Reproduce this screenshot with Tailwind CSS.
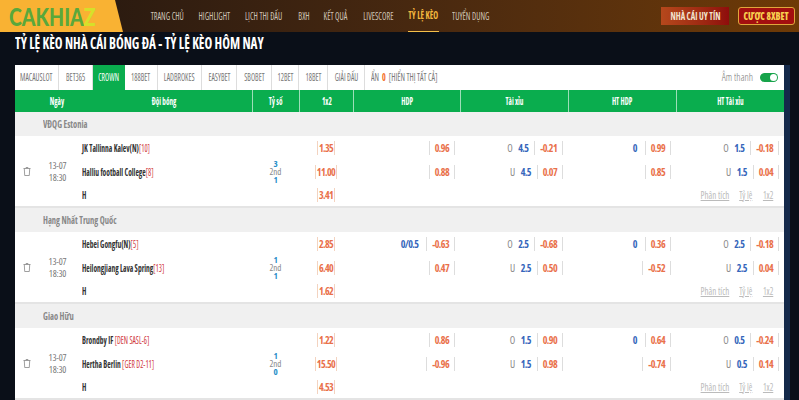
<!DOCTYPE html>
<html lang="vi">
<head>
    <meta charset="UTF-8">
    <title>Tỷ lệ kèo</title>
    <script src="https://cdn.jsdelivr.net/npm/@tailwindcss/browser@4"></script>
</head>
<body class="h-[400px] w-[799px] overflow-hidden bg-[#0a0f18] font-['Open_Sans',sans-serif] [font-stretch:75%]">
    <header class="flex h-8 items-center bg-gradient-to-r from-[#22160f] to-[#6e3a06]">
        <div class="flex h-8 w-[123px] items-center bg-[#f9b233] pl-[9px] font-['Lato',sans-serif] text-[25px] font-black leading-none text-[#5aa83b] [clip-path:polygon(0_0,115px_0,123px_100%,0_100%)]"><span class="origin-left scale-x-[.78] whitespace-nowrap">CAKHIA<span class="text-[#d6e02a]">Z</span></span></div>
        <nav class="ml-[27px] flex h-8 gap-[13px] text-[10px] font-medium text-[#cfc4b6]">
            <a class="flex w-[35px] items-center justify-center"><span class="shrink-0 scale-x-[.82] whitespace-nowrap">TRANG CHỦ</span></a>
            <a class="flex w-[33px] items-center justify-center"><span class="shrink-0 scale-x-[.82] whitespace-nowrap">HIGHLIGHT</span></a>
            <a class="flex w-[40px] items-center justify-center"><span class="shrink-0 scale-x-[.82] whitespace-nowrap">LỊCH THI ĐẤU</span></a>
            <a class="flex w-[13px] items-center justify-center"><span class="shrink-0 scale-x-[.82] whitespace-nowrap">BXH</span></a>
            <a class="flex w-[26px] items-center justify-center"><span class="shrink-0 scale-x-[.82] whitespace-nowrap">KẾT QUẢ</span></a>
            <a class="flex w-[33px] items-center justify-center"><span class="shrink-0 scale-x-[.82] whitespace-nowrap">LIVESCORE</span></a>
            <a class="flex w-[31px] items-center justify-center border-b border-[#f5c04a] font-bold text-[#f5b93f]"><span class="shrink-0 scale-x-[.82] whitespace-nowrap">TỶ LỆ KÈO</span></a>
            <a class="flex w-[38px] items-center justify-center"><span class="shrink-0 scale-x-[.82] whitespace-nowrap">TUYỂN DỤNG</span></a>
        </nav>
        <a class="ml-auto flex h-[18px] w-[68px] items-center justify-center bg-gradient-to-r from-[#b5481c] to-[#8f0c0c] text-[10px] font-bold text-[#f3e3cf]"><span class="shrink-0 scale-x-[.85] whitespace-nowrap">NHÀ CÁI UY TÍN</span></a>
        <a class="ml-[9px] mr-1 flex h-[18px] w-[57px] items-center justify-center rounded-[3px] border border-[#e0a63c] bg-[#a30f0f] text-[10px] font-extrabold text-[#f8cf4f]"><span class="shrink-0 scale-x-[.9] whitespace-nowrap">CƯỢC 8XBET</span></a>
    </header>
    <h1 class="ml-[15px] mt-px flex text-[16px] font-bold leading-[20px] text-white"><span class="origin-left scale-x-[.82] whitespace-nowrap">TỶ LỆ KÈO NHÀ CÁI BÓNG ĐÁ - TỶ LỆ KÈO HÔM NAY</span></h1>
    <div class="ml-[15px] mt-3 flex w-[775px]">
        <main class="w-[769px] bg-white">
            <div class="flex h-[25px] items-stretch text-[10px] font-medium text-[#777]">
                <a class="flex w-[44px] items-center justify-center border-r border-[#ddd]"><span class="shrink-0 scale-x-[.76] whitespace-nowrap">MACAUSLOT</span></a>
                <a class="flex w-[34px] items-center justify-center border-r border-[#ddd]"><span class="shrink-0 scale-x-[.76] whitespace-nowrap">BET365</span></a>
                <a class="flex w-[32px] items-center justify-center bg-[#0aad4e] text-white"><span class="shrink-0 scale-x-[.76] whitespace-nowrap">CROWN</span></a>
                <a class="flex w-[33px] items-center justify-center border-r border-[#ddd]"><span class="shrink-0 scale-x-[.76] whitespace-nowrap">188BET</span></a>
                <a class="flex w-[44px] items-center justify-center border-r border-[#ddd]"><span class="shrink-0 scale-x-[.76] whitespace-nowrap">LADBROKES</span></a>
                <a class="flex w-[35px] items-center justify-center border-r border-[#ddd]"><span class="shrink-0 scale-x-[.76] whitespace-nowrap">EASYBET</span></a>
                <a class="flex w-[35px] items-center justify-center border-r border-[#ddd]"><span class="shrink-0 scale-x-[.76] whitespace-nowrap">SBOBET</span></a>
                <a class="flex w-[27px] items-center justify-center border-r border-[#ddd]"><span class="shrink-0 scale-x-[.76] whitespace-nowrap">12BET</span></a>
                <a class="flex w-[29px] items-center justify-center border-r border-[#ddd]"><span class="shrink-0 scale-x-[.76] whitespace-nowrap">18BET</span></a>
                <a class="flex w-[37px] items-center justify-center border-r border-[#ddd]"><span class="shrink-0 scale-x-[.76] whitespace-nowrap">GIẢI ĐẤU</span></a>
                <span class="ml-[6px] flex items-center"><span class="origin-left scale-x-[.8] whitespace-pre">ẨN  <b class="text-[#f26a21]">0</b>  [HIỂN THỊ TẤT CẢ]</span></span>
                <span class="ml-auto flex items-center text-[10px] font-light">Âm thanh</span>
                <span class="ml-[7px] mr-[6px] mt-2 flex h-[9px] w-[18px] items-center justify-end rounded-full bg-[#16a34a] pr-px"><i class="block h-[7px] w-[7px] rounded-full bg-white"></i></span>
            </div>
            <div class="grid h-[22px] grid-cols-[237px_47px_54px_107px_108px_108px_108px] bg-[#0aad4e] text-[10px] font-bold text-white">
                <div class="grid grid-cols-[84px_1fr]"><span class="flex items-center justify-center"><span class="shrink-0 scale-x-[.72] whitespace-nowrap">Ngày</span></span><span class="flex items-center justify-center pr-[22px]"><span class="shrink-0 scale-x-[.72] whitespace-nowrap">Đội bóng</span></span></div>
                <span class="flex items-center justify-center border-l border-white/60"><span class="shrink-0 scale-x-[.72] whitespace-nowrap">Tỷ số</span></span>
                <span class="flex items-center justify-center border-l border-white/60"><span class="shrink-0 scale-x-[.72] whitespace-nowrap">1x2</span></span>
                <span class="flex items-center justify-center border-l border-white/60"><span class="shrink-0 scale-x-[.72] whitespace-nowrap">HDP</span></span>
                <span class="flex items-center justify-center border-l border-white/60"><span class="shrink-0 scale-x-[.72] whitespace-nowrap">Tài xỉu</span></span>
                <span class="flex items-center justify-center border-l border-white/60"><span class="shrink-0 scale-x-[.72] whitespace-nowrap">HT HDP</span></span>
                <span class="flex items-center justify-center border-l border-white/60"><span class="shrink-0 scale-x-[.72] whitespace-nowrap">HT Tài xỉu</span></span>
            </div>
            <div id="rows"></div>
        </main>
        <div class="w-[6px] bg-[#14294a]"></div>
    </div>
    <script>
        const matches = [
            { league: "VĐQG Estonia", score: ["3", "1"], rows: [
                ["JK Tallinna Kalev(N)", "[10]", "1.35", "", "0.96", "O", "4.5", "-0.21", "0", "0.99", "O", "1.5", "-0.18"],
                ["Halliu football College", "[8]", "11.00", "", "0.88", "U", "4.5", "0.07", "", "0.85", "U", "1.5", "0.04"],
                ["H", "", "3.41"]] },
            { league: "Hạng Nhất Trung Quốc", score: ["1", "1"], rows: [
                ["Hebei Gongfu(N)", "[5]", "2.85", "0/0.5", "-0.63", "O", "2.5", "-0.68", "0", "0.36", "O", "2.5", "-0.18"],
                ["Heilongjiang Lava Spring", "[13]", "6.40", "", "0.47", "U", "2.5", "0.50", "", "-0.52", "U", "2.5", "0.04"],
                ["H", "", "1.62"]] },
            { league: "Giao Hữu", score: ["1", "0"], rows: [
                ["Brondby IF", " [DEN SASL-6]", "1.22", "", "0.86", "O", "1.5", "0.90", "0", "0.64", "O", "0.5", "-0.24"],
                ["Hertha Berlin", " [GER D2-11]", "15.50", "", "-0.96", "U", "1.5", "0.98", "", "-0.74", "U", "0.5", "0.14"],
                ["H", "", "4.53"]] }
        ];

        const trash = `<svg class="h-[9px] w-[8px] text-[#888]" viewBox="0 0 8 9" fill="none" stroke="currentColor" stroke-width=".8"><path d="M.5 1.5h7M3 1.5V.5h2v1M1.3 1.5l.4 7h4.6l.4-7"/></svg>`;

        function handicap(line, value) {
            return `<div class="flex items-center justify-end pr-[5px] text-[10px] tracking-[-0.6px]">
                <span class="font-bold text-[#3566bb]">${line}</span>
                <span class="ml-[8px] border-x border-[#ddd] px-[5px] font-bold leading-[14px] text-[#e9704a]">${value}</span>
            </div>`;
        }

        function overUnder(side, line, value) {
            return `<div class="flex items-center justify-end pr-[5px] text-[10px] tracking-[-0.6px]">
                <span class="text-[#888]">${side}</span>
                <span class="ml-[6px] font-bold text-[#3566bb]">${line}</span>
                <span class="ml-[6px] border-x border-[#ddd] px-[5px] font-bold leading-[14px] text-[#e9704a]">${value}</span>
            </div>`;
        }

        function row(r) {
            const team = `<div class="flex items-center pl-[67px] font-bold text-[#333]"><span class="origin-left scale-x-[.75] whitespace-nowrap">${r[0]}<span class="font-medium text-[#d0383c]">${r[1]}</span></span></div>`;
            const odds = `<div class="flex items-center justify-center text-[10px] tracking-[-0.6px]"><span class="border-x border-[#f3d3c0] px-px font-bold leading-[14px] text-[#e9704a]">${r[2]}</span></div>`;
            if (r.length === 3) {
                const links = `<div class="col-span-4 flex items-center justify-end gap-[11px] pr-[11px] text-[#bbb] underline"><span class="flex w-[27px] justify-center"><span class="shrink-0 scale-x-[.9] whitespace-nowrap">Phân tích</span></span><span class="flex w-[14px] justify-center"><span class="shrink-0 scale-x-[.85] whitespace-nowrap">Tỷ lệ</span></span><span class="flex w-[9px] justify-center"><span class="shrink-0 scale-x-[.85] whitespace-nowrap">1x2</span></span></div>`;
                return team + `<div></div>` + odds + links;
            }
            return team + `<div></div>` + odds + handicap(r[3], r[4]) + overUnder(r[5], r[6], r[7]) + handicap(r[8], r[9]) + overUnder(r[10], r[11], r[12]);
        }

        document.getElementById("rows").innerHTML = matches.map(m => `
            <div class="flex h-6 items-center bg-[#f0f0f0] pl-[28px] text-[10px] font-bold text-[#888]"><span class="origin-left scale-x-[.85] whitespace-nowrap">${m.league}</span></div>
            <div class="relative grid h-[72px] grid-cols-[237px_47px_54px_107px_108px_108px_108px] grid-rows-[24px_24px_22px] border-b-2 border-[#e4e4e4] text-[10px]">
                ${m.rows.map(row).join("")}
                <div class="absolute left-[8px] top-[31px] flex">${trash}</div>
                <div class="absolute left-[27px] top-[24px] w-[31px] text-center text-[9.5px] leading-[12px] tracking-[-0.2px] text-[#777]">13-07<br>18:30</div>
                <div class="absolute left-[237px] top-[24px] w-[47px] text-center text-[9px] leading-[8px] text-[#888]"><b class="block font-bold text-[#2a8fc9]">${m.score[0]}</b>2nd<b class="block font-bold text-[#2a8fc9]">${m.score[1]}</b></div>
            </div>`).join("");
    </script>
</body>
</html>
